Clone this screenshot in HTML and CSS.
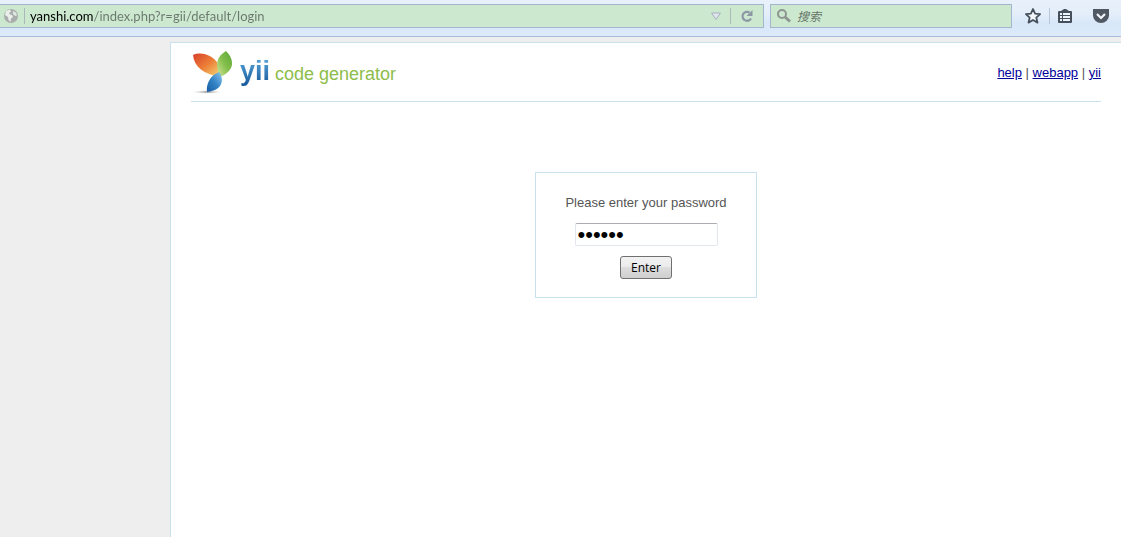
FILE: index.html
```html
<!DOCTYPE html>
<html lang="en">
<head>
    <meta charset="UTF-8">
    <meta name="viewport" content="width=device-width, initial-scale=1.0">
    <title>yii code generator</title>
    <link rel="stylesheet" href="styles.css">
</head>
<body>
    <div class="toolbar">
        <form class="address-bar">
            <svg class="globe" width="16" height="16" viewBox="0 0 16 16" aria-hidden="true">
                <circle cx="8" cy="8" r="7" fill="#a9aeac"/>
                <path d="M3 3l4-1.500 1 2-2 1.500 1 1.500 2 .5 1 2-2 1.500-.5 3.500-2-2-.5-3L2 7z" fill="#e9eeea"/>
                <path d="M10 3l3 1.500 1 3-2 .5-2-2z" fill="#dfe5e1"/>
            </svg>
            <span class="divider"></span>
            <input class="url" type="text" aria-label="Address" value="yanshi.com/index.php?r=gii/default/login">
            <button class="icon-button" type="button" aria-label="History">
                <svg width="12" height="10" viewBox="0 0 12 10">
                    <path d="M1.500 2h9L6 8.500z" fill="#dfe4ee" stroke="#a9b0bf"/>
                </svg>
            </button>
            <span class="divider"></span>
            <button class="icon-button reload" type="button" aria-label="Reload">
                <svg width="14" height="14" viewBox="0 0 14 14">
                    <path d="M11 9.500A4.500 4.500 0 1 1 9.500 3.500" fill="none" stroke="#8c98a5" stroke-width="2.200"/>
                    <path d="M12.500 1v6h-6z" fill="#8c98a5"/>
                </svg>
            </button>
        </form>
        <form class="search-bar">
            <svg width="16" height="16" viewBox="0 0 16 16" aria-hidden="true">
                <circle cx="6" cy="6" r="4" fill="none" stroke="#8d9590" stroke-width="2"/>
                <path d="M9 9l5 4.500" stroke="#8d9590" stroke-width="3"/>
            </svg>
            <input class="search" type="text" aria-label="搜索" placeholder="搜索">
        </form>
        <div class="tools">
            <button class="icon-button" type="button" aria-label="Bookmark">
                <svg width="18" height="18" viewBox="0 0 18 18">
                    <path d="M9 2l2.100 4.700 5 .5-3.800 3.400 1.200 5L9 13l-4.500 2.600 1.200-5L1.900 7.200l5-.5z" fill="#f2f6fb" stroke="#46505c" stroke-width="1.800" stroke-linejoin="round"/>
                </svg>
            </button>
            <span class="divider"></span>
            <button class="icon-button" type="button" aria-label="Bookmarks list">
                <svg width="16" height="16" viewBox="0 0 16 16">
                    <path d="M4 3l3-2h2l3 2h2q1 0 1 1v10q0 1-1 1H2q-1 0-1-1V4q0-1 1-1z" fill="#46505c"/>
                    <path d="M3 6h2M3 9h2M3 12h2M6 6h7M6 9h7M6 12h7" stroke="#eef4fb" stroke-width="2"/>
                </svg>
            </button>
            <button class="icon-button pocket" type="button" aria-label="Pocket">
                <svg width="16" height="16" viewBox="0 0 16 16">
                    <path d="M0 1h16v6.500a8 7.500 0 0 1-16 0z" fill="#505863"/>
                    <path d="M4 6l4 4 4-4" fill="none" stroke="#f2f6fb" stroke-width="2.200"/>
                </svg>
            </button>
        </div>
    </div>
    <div class="page">
        <div class="header">
            <div class="logo">
                <svg class="mark" width="42" height="44" viewBox="0 0 42 44" aria-hidden="true">
                    <defs>
                        <linearGradient id="orange" x1="0" y1="0" x2="1" y2="1">
                            <stop offset="0" stop-color="#d8402a"/>
                            <stop offset=".5" stop-color="#ec8038"/>
                            <stop offset="1" stop-color="#f9dc78"/>
                        </linearGradient>
                        <linearGradient id="green" x1="1" y1="0" x2="0" y2="1">
                            <stop offset="0" stop-color="#5aa636"/>
                            <stop offset=".5" stop-color="#85bf4c"/>
                            <stop offset="1" stop-color="#d6e8a0"/>
                        </linearGradient>
                        <linearGradient id="blue" x1="1" y1="0" x2="0" y2="1">
                            <stop offset="0" stop-color="#8cc8ea"/>
                            <stop offset=".5" stop-color="#3484c8"/>
                            <stop offset="1" stop-color="#165ca0"/>
                        </linearGradient>
                        <radialGradient id="shadow">
                            <stop offset="0" stop-color="#777"/>
                            <stop offset="1" stop-color="#fff" stop-opacity="0"/>
                        </radialGradient>
                    </defs>
                    <ellipse cx="16" cy="42" rx="16" ry="2" fill="url(#shadow)"/>
                    <path d="M2 5C11 1 23 6 27 14c2 4 3 8 2 13C13 24 3 17 2 5z" fill="url(#orange)"/>
                    <path d="M35 1c8 8 10 19-6 26C24 15 25 7 35 1z" fill="url(#green)"/>
                    <path d="M28 22c5 6 5 18-12 20-1-7 2-16 12-20z" fill="url(#blue)"/>
                </svg>
                <span class="yii">yii</span>
                <span class="name">code generator</span>
            </div>
            <div class="top-menus">
                <a href="#help">help</a> |
                <a href="#webapp">webapp</a> |
                <a href="#yii">yii</a>
            </div>
        </div>
        <div class="content">
            <form class="login">
                <label for="password">Please enter your password</label>
                <input class="password" type="password" id="password" value="123456">
                <button class="submit" type="submit">Enter</button>
            </form>
        </div>
    </div>
</body>
</html>
```
FILE: styles.css
```css
* {
    box-sizing: border-box;
}

body {
    margin: 0;
    min-height: 100vh;
    display: flex;
    flex-direction: column;
    background-color: #eee;
    color: #555;
    font-family: "Liberation Sans", Arial, sans-serif;
    font-size: 13px;
}

.toolbar {
    display: flex;
    padding: 4px 12px 8px 0;
    background: linear-gradient(#e8f1fa, #e4eefa 40%, #d9e8f9 60%, #dbe9f9);
    border-bottom: 1px solid #a9bdd8;
}

.address-bar,
.search-bar {
    display: flex;
    align-items: center;
    height: 24px;
    background-color: #cce8cf;
    border: 1px solid #a5b5cb;
}

.address-bar {
    flex: 1;
    border-left: none;
    padding-left: 3px;
}

.search-bar {
    width: 242px;
    margin-left: 6px;
    padding-left: 5px;
}

.divider {
    width: 1px;
    height: 16px;
    background-color: #a8b9b8;
}

.url,
.search {
    flex: 1;
    min-width: 0;
    border: none;
    outline: none;
    padding: 0 5px;
    background-color: transparent;
    font-family: "Open Sans", "Noto Sans CJK SC", sans-serif;
    font-size: 12px;
}

/* domain is darker than the rest of the address */
.url {
    color: transparent;
    caret-color: #000;
    background-image: linear-gradient(to right, #000 69px, #6b786e 69px);
    -webkit-background-clip: text;
    background-clip: text;
    font-family: Lato, "Open Sans", sans-serif;
    font-size: 13px;
}

.globe {
    margin-right: 5px;
}

.search::placeholder {
    color: #667568;
    font-style: italic;
}

.icon-button {
    display: flex;
    padding: 0;
    border: none;
    background: none;
    cursor: pointer;
}

.address-bar .icon-button {
    margin: 0 8px;
}

.address-bar .reload {
    margin: 0 9px;
}

.tools {
    display: flex;
    align-items: center;
    gap: 7px;
    margin-left: 12px;
}

.tools .divider {
    background-color: #b9c8d9;
}

.pocket {
    margin-left: 13px;
}

.page {
    flex: 1;
    margin: 5px 0 0 170px;
    padding: 0 20px;
    background-color: #fff;
    border-top: 1px solid #c9e0ed;
    border-left: 1px solid #c9e0ed;
}

.header {
    display: flex;
    justify-content: space-between;
    align-items: center;
    height: 59px;
    border-bottom: 1px solid #c9e0ed;
}

.logo {
    display: flex;
    align-items: baseline;
    line-height: 44px;
}

.mark {
    align-self: center;
    margin-right: 7px;
}

.yii {
    background: linear-gradient(#5aa8dc 20%, #1a5c9e 80%);
    -webkit-background-clip: text;
    background-clip: text;
    color: transparent;
    font-size: 27px;
    font-weight: bold;
}

.name {
    margin-left: 5px;
    color: #8dbd4c;
    font-size: 18px;
}

.top-menus a {
    color: #000099;
}

.login {
    display: flex;
    flex-direction: column;
    align-items: center;
    width: 222px;
    margin: 70px auto 0;
    padding: 22px 20px 18px;
    border: 1px solid #c9e0ed;
}

.password {
    width: 143px;
    height: 23px;
    margin: 13px 0 10px;
    padding: 0 2px;
    border: 1px solid #e2e6ee;
    border-top-color: #abadb3;
    border-radius: 2px;
    color: #000;
    font-family: "Liberation Sans", Arial, sans-serif;
    font-size: 22px;
}

.submit {
    height: 23px;
    padding: 0 10px;
    border: 1px solid #707070;
    border-radius: 3px;
    background: linear-gradient(#f2f2f2, #ebebeb 50%, #ddd 50%, #cfcfcf);
    color: #000;
    font-family: "Open Sans", sans-serif;
    font-size: 12px;
}
```
